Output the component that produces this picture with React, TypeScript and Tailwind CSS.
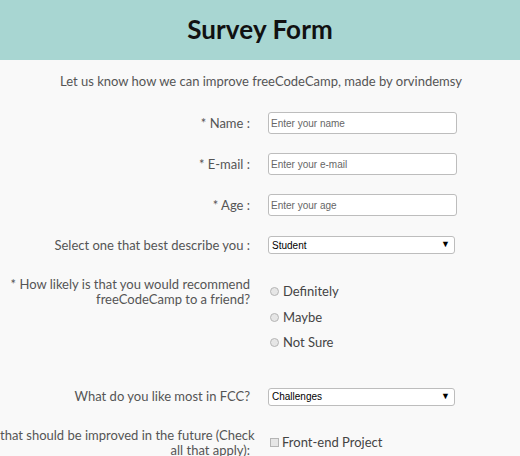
const labelCls = "w-[250px] shrink-0 text-right text-[13px] text-[#555] leading-[15px]";
const inputCls =
  "ml-[18px] w-[189px] h-[22px] rounded-[3px] border border-[#bdbdbd] bg-white px-[2px] text-[10px] text-[#333] placeholder:text-[#666] font-['Liberation_Sans',Arial,sans-serif] outline-none";

const Select = ({ value }: { value: string }) => (
  <div className="ml-[18px] w-[187px] h-[18px] rounded-[3px] border border-[#bdbdbd] bg-white flex items-center justify-between pl-[3px] pr-[4px] font-['Liberation_Sans',Arial,sans-serif]">
    <span className="text-[10px] text-black">{value}</span>
    <span className="text-[9px] text-black">▼</span>
  </div>
);

const Radio = ({ label }: { label: string }) => (
  <div className="h-[25.5px] flex items-center">
    <span className="w-[9px] h-[9px] rounded-full border border-[#b5b5b5] bg-[#e6e6e6] ml-[2px]" />
    <span className="ml-[4px] text-[13px] text-[#444]">{label}</span>
  </div>
);

export default function App() {
  return (
    <div className="w-[520px] h-[456px] overflow-hidden bg-[#f9f9f9] font-['Lato','Open_Sans',sans-serif]">
      <div className="h-[60px] bg-[#a8d6d2] flex items-center justify-center">
        <h1 className="text-[26px] font-bold text-[#111] tracking-[0.1px] -mt-[1px]">Survey Form</h1>
      </div>
      <p className="mt-[11px] text-center text-[13px] leading-[20px] text-[#555] pl-[2px]">
        Let us know how we can improve freeCodeCamp, made by orvindemsy
      </p>

      <form className="flex flex-col">
        <div className="mt-[21px] flex items-center">
          <label className={labelCls}>* Name :</label>
          <input className={inputCls} placeholder="Enter your name" />
        </div>
        <div className="mt-[19px] flex items-center">
          <label className={labelCls}>* E-mail :</label>
          <input className={inputCls} placeholder="Enter your e-mail" />
        </div>
        <div className="mt-[19px] flex items-center">
          <label className={labelCls}>* Age :</label>
          <input className={inputCls} placeholder="Enter your age" />
        </div>
        <div className="mt-[20px] flex items-center">
          <label className={labelCls}>Select one that best describe you :</label>
          <Select value="Student" />
        </div>
        <div className="mt-[23px] flex items-start">
          <label className={labelCls}>
            * How likely is that you would recommend freeCodeCamp to a friend?
          </label>
          <div className="ml-[18px] pt-[2px] flex flex-col">
            <Radio label="Definitely" />
            <Radio label="Maybe" />
            <Radio label="Not Sure" />
          </div>
        </div>
        <div className="mt-[32px] flex items-center">
          <label className={labelCls}>What do you like most in FCC?</label>
          <Select value="Challenges" />
        </div>
        <div className="mt-[22px] flex items-center">
          <label className={labelCls + " whitespace-nowrap"}>
            that should be improved in the future (Check
            <br />
            all that apply):
          </label>
          <div className="ml-[20px] flex items-center">
            <span className="w-[9px] h-[9px] border border-[#b5b5b5] bg-[#e6e6e6]" />
            <span className="ml-[3px] text-[13px] text-[#444]">Front-end Project</span>
          </div>
        </div>
      </form>
    </div>
  );
}
